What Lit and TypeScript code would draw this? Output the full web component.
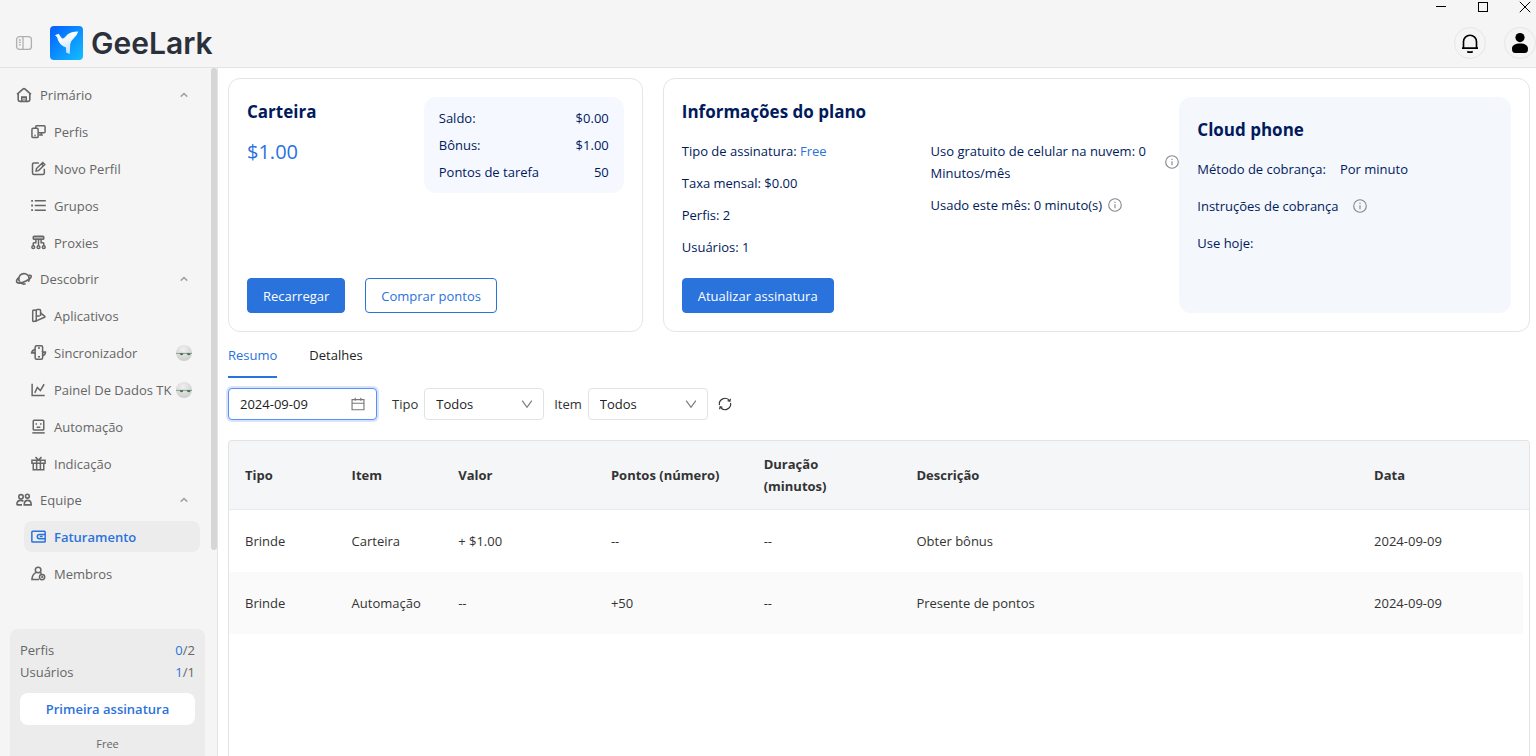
import { LitElement, html, svg, css, nothing } from "lit";
import { customElement, property, state } from "lit/decorators.js";
import { classMap } from "lit/directives/class-map.js";

/** Line icons, all drawn on a 16 x 16 grid. */
const icons: Record<string, unknown> = {
  home: svg`<path d="M1 7.400 6.900 2.100q1.100-1 2.200 0L15 7.400M2.200 6.600v6.200q0 1.600 1.600 1.600h8.400q1.600 0 1.600-1.600V6.600"/><path d="M5.800 14.200v-4.100h4.400v4.100M8 11.400v1.400"/>`,
  profiles: svg`<rect x="1" y="4.600" width="6.600" height="9.800" rx="1.200"/><path d="M5 4.400V2.800q0-1 1-1h8q1 0 1 1v5.400q0 1-1 1H7.800M11 9.400v2.200M8.600 11.800h4M3.600 12.200h1.400"/>`,
  edit: svg`<path d="M8.400 2H3.200Q1.600 2 1.600 3.600v9.200q0 1.600 1.600 1.600h9.400q1.600 0 1.600-1.600V8.200"/><path d="m5.400 10.800.5-2.800 6.600-6.400 2.200 2.200-6.600 6.500zM11 3l2.200 2.200"/>`,
  list: svg`<path d="M4 3h11.800M4 8h11.800M4 13h11.800"/><path d="M.2 3h1.900M.2 8h1.900M.2 13h1.900" stroke-width="1.900"/>`,
  proxies: svg`<rect x="2.400" y="1.200" width="11.200" height="3.400" rx="1" fill="currentColor" fill-opacity=".45"/><path d="M8 4.800v6.400M2.400 11.400V8.200M13.600 8.200v3.200M2.400 8.200h2.800V5M13.600 8.200h-2.800V5"/><circle cx="2.400" cy="13" r="1.500"/><circle cx="8" cy="13" r="1.500"/><circle cx="13.600" cy="13" r="1.500"/>`,
  planet: svg`<circle cx="8" cy="7.800" r="5.200" stroke-dasharray="21.500 3.500 6.500 1.200" transform="rotate(150 8 7.800)"/><path d="M3 6.400C.8 8.200 0 10.200.8 11.100c1.300 1.500 5.100 1 9.200-1.100 4-2 6-4 5.200-5.200-.3-.5-1.200-.7-2.600-.5"/>`,
  apps: svg`<path d="M5.600 2.600 3 2.200q-1.200 0-1.200 1.200v9.800q0 1.200 1.200 1.200l2.600-.6V2.600q0-1 1-1h2.600q1 0 1 1v5.800"/><path d="M4.400 14.300 14.400 9.900q.9-.6 0-1.300L10.200 5.200M5.800 8.400h3.600"/>`,
  sync: svg`<rect x="4.400" y=".8" width="8" height="14.400" rx="1.600"/><path d="M7.400 3.200h2.200M4.200 4.800C1.800 5.400.8 6.800.6 8.600h3.200L2.600 7.200M12.800 11.200c1.800-.6 2.600-2 2.600-3.800h-2.600l1.200 1.200M7.400 12.600h2.200"/>`,
  chart: svg`<path d="M1.200 1.800v12.600h13.400M4 11.600l2.800-5.800 3.200 3.400 4-6.800"/>`,
  robot: svg`<rect x="2.400" y="1.200" width="11.200" height="10.600" rx="1"/><path d="M1.400 14.800h13.200"/><path d="M5.600 4.400v1.800M10.400 4.400v1.800M6 8.800h4"/>`,
  gift: svg`<path d="M1 4.600h14v3.200H1zM2.400 7.800v6.800h11.200V7.800M6 4.800v9.600M10 4.800v9.600M4.800 1.200 8 4.400l3.200-3.200"/>`,
  team: svg`<circle cx="5" cy="4.800" r="2.200"/><circle cx="11.400" cy="4.200" r="1.900"/><path d="M.8 12.800c0-2.800 1.600-4.400 4-4.400 1 0 1.900.3 2.600.9M.8 12.900H6M8.200 12.900h7c0-2.800-1.200-4.500-3.500-4.500s-3.500 1.700-3.500 4.500z"/>`,
  wallet: svg`<rect x=".9" y="2.400" width="14.200" height="11.400" rx=".8"/><path d="M15 5.800H9a2.300 2.300 0 0 0 0 4.600h6M9.400 8.100h3"/>`,
  member: svg`<circle cx="7.600" cy="4.200" r="3"/><path d="M5.600 6.800C2.800 8 1.200 10.400 1 14.400h7.600M9.600 6.800l1.800 1.400"/><circle cx="11.800" cy="11.800" r="2.800"/><path d="M11.800 10.400v1.600h1.200"/>`,
  toggle: svg`<rect x=".6" y="1.600" width="14.800" height="12.800" rx="3"/><path d="M7 1.800v12.400M2.800 5h2M2.800 7.400h2M2.800 9.800h2"/>`,
  bell: svg`<path d="M2.800 12V7a5.200 5.200 0 0 1 10.400 0v5M1.600 12.100h12.800M5.800 14.900q2.200.9 4.400 0"/>`,
  info: svg`<circle cx="8" cy="8" r="7.200"/><path d="M8 7v4.600M8 4.200v1.400"/>`,
  up: svg`<path d="m1.400 11.200 6.600-6 6.600 6" stroke-width="3"/>`,
  down: svg`<path d="m1.600 3.400 6.400 9 6.400-9"/>`,
  calendar: svg`<path d="M1.200 3h13.600v11.600H1.200zM1.200 7.200h13.600M4.800.8v3.600M11.200.8v3.600"/>`,
  refresh: svg`<path d="M1.600 9.200A6.500 6.500 0 0 1 13.200 4.200M14.400 6.800A6.500 6.500 0 0 1 2.800 11.800"/><path d="m14.200 2-.6 2.800-2.600-.6M1.800 14l.6-2.800 2.600.6"/>`,
};

@customElement("gl-icon")
class GlIcon extends LitElement {
  @property() name = "";
  static styles = css`
    :host { display: inline-flex; flex: none; width: 16px; height: 16px; }
    svg { width: 100%; height: 100%; fill: none; stroke: currentColor; stroke-width: var(--icon-stroke, 1.3); overflow: visible; }
  `;
  render() {
    return html`<svg viewBox="0 0 16 16" aria-hidden="true">${icons[this.name]}</svg>`;
  }
}

interface NavItem { icon: string; label: string; badge?: boolean; active?: boolean }
interface NavGroup { icon: string; label: string; items: NavItem[] }

const groups: NavGroup[] = [
  {
    icon: "home", label: "Primário", items: [
      { icon: "profiles", label: "Perfis" },
      { icon: "edit", label: "Novo Perfil" },
      { icon: "list", label: "Grupos" },
      { icon: "proxies", label: "Proxies" },
    ],
  },
  {
    icon: "planet", label: "Descobrir", items: [
      { icon: "apps", label: "Aplicativos" },
      { icon: "sync", label: "Sincronizador", badge: true },
      { icon: "chart", label: "Painel De Dados TK", badge: true },
      { icon: "robot", label: "Automação" },
      { icon: "gift", label: "Indicação" },
    ],
  },
  {
    icon: "team", label: "Equipe", items: [
      { icon: "wallet", label: "Faturamento", active: true },
      { icon: "member", label: "Membros" },
    ],
  },
];

@customElement("gl-sidebar")
class GlSidebar extends LitElement {
  static styles = css`
    :host {
      position: relative; display: flex; flex-direction: column; width: 217px; min-height: 0;
      background: #f5f5f5; border-right: 1px solid #e3e3e3; color: #666; font-size: 13px; line-height: 22px;
      --icon-stroke: 1.6;
    }
    nav { flex: 1; min-height: 0; overflow: hidden; display: flex; flex-direction: column; gap: 6px; padding: 12px 17px 0 16px; }
    ul { list-style: none; margin: 0; padding: 0 0 0 8px; display: flex; flex-direction: column; gap: 6px; }
    .group { display: flex; align-items: center; gap: 8px; height: 30px; padding: 0 12px 0 0; border: 0; background: none; font: inherit; color: inherit; text-align: left; }
    .group .label { flex: 1; }
    .chevron { width: 8px; height: 8px; color: #a3a3a3; }
    a { display: flex; align-items: center; gap: 8px; height: 31px; padding: 0 8px 0 7px; border-radius: 8px; color: inherit; text-decoration: none; white-space: nowrap; }
    a gl-icon { width: 15px; height: 15px; }
    a .label { flex: 1; min-width: 0; }
    a.badged { gap: 0; }
    a.badged gl-icon { margin-right: 8px; }
    a.active { background: #ececec; color: #2a72dc; font-weight: 600; }
    .badge { width: 16px; height: 16px; flex: none; }
    .thumb { position: absolute; top: 0; right: 0; width: 6px; height: 70%; border-radius: 3px; background: #d6d6d6; }
    .quota { margin: 0 12px 0 10px; padding: 10px 10px 1px; border-radius: 8px 8px 0 0; background: #ececec; }
    .row { display: flex; justify-content: space-between; }
    .row b { font-weight: 400; color: #2a72dc; }
    .subscribe { width: 100%; height: 32px; margin: 10px 0 8px; border: 0; border-radius: 8px; background: #fff; color: #2a72dc; font: inherit; font-weight: 600; }
    .plan { text-align: center; font-size: 11px; }
  `;
  render() {
    return html`
      <nav aria-label="Menu">
        ${groups.map((g) => html`
          <button class="group" type="button"><gl-icon name=${g.icon}></gl-icon><span class="label">${g.label}</span><gl-icon class="chevron" name="up"></gl-icon></button>
          <ul>${g.items.map((i) => html`<li>
            <a href="#" class=${classMap({ active: !!i.active, badged: !!i.badge })}>
              <gl-icon name=${i.icon}></gl-icon><span class="label">${i.label}</span>
              ${i.badge ? this.badge() : nothing}
            </a></li>`)}</ul>`)}
      </nav>
      <div class="thumb"></div>
      <section class="quota">
        <div class="row"><span>Perfis</span><span><b>0</b>/2</span></div>
        <div class="row"><span>Usuários</span><span><b>1</b>/1</span></div>
        <button class="subscribe" type="button">Primeira assinatura</button>
        <div class="plan">Free</div>
      </section>`;
  }
  badge() {
    return html`<svg class="badge" viewBox="0 0 16 16" aria-hidden="true">
      <defs><radialGradient id="ball" cx=".45" cy=".3" r=".7"><stop offset="0" stop-color="#f0f0f0"/><stop offset="1" stop-color="#cdcdcd"/></radialGradient></defs>
      <circle cx="8" cy="8" r="8" fill="url(#ball)"/>
      <path d="M0 8.400h16" stroke="#8a8a8a" stroke-width=".8"/>
      <path d="M3.600 8.200h3.800q-.2 2-1.800 2t-2-2zM10.600 8.200h4q-.2 2-1.800 2t-2.200-2z" fill="#2f7a48"/>
    </svg>`;
  }
}

@customElement("gl-header")
class GlHeader extends LitElement {
  static styles = css`
    :host { display: flex; flex-direction: column; background: #f5f5f5; border-bottom: 1px solid #e3e3e3; }
    button { padding: 0; border: 0; background: none; color: #000; display: grid; place-items: center; }
    .window { display: flex; justify-content: flex-end; gap: 30px; height: 14px; padding-right: 5px; }
    .window button { width: 12px; height: 14px; }
    .window svg { width: 12px; height: 12px; fill: none; stroke: #000; }
    .bar { display: flex; align-items: center; height: 48px; padding: 5px 0 0 16px; }
    .toggle { color: #b0b0b0; }
    .logo { display: flex; align-items: center; gap: 8px; flex: 1; margin-left: 18px; color: #2c303a; font: 600 30px/36px Inter, "Open Sans", sans-serif; text-decoration: none; }
    .logo svg { width: 33px; height: 34px; }
    .actions { display: flex; gap: 18px; }
    .round { width: 32px; height: 32px; border: 1px solid #e6e6e6; border-radius: 50%; }
    .round gl-icon { width: 20px; height: 20px; }
    .round svg { width: 18px; height: 22px; }
  `;
  render() {
    return html`
      <div class="window">
        <button type="button" aria-label="Minimizar"><svg viewBox="0 0 12 12"><path d="M1 5.500h10"/></svg></button>
        <button type="button" aria-label="Maximizar"><svg viewBox="0 0 12 12"><rect x="1.500" y="1.500" width="9" height="9"/></svg></button>
        <button type="button" aria-label="Fechar"><svg viewBox="0 0 12 12"><path d="m.8.800 10.400 10.400M11.200.800.800 11.200"/></svg></button>
      </div>
      <div class="bar">
        <button class="toggle" type="button" aria-label="Recolher menu"><gl-icon name="toggle"></gl-icon></button>
        <a class="logo" href="#">
          <svg viewBox="0 0 33 34" aria-hidden="true">
            <defs>
              <linearGradient id="sky" x1="0" y1="0" x2="1" y2="1"><stop offset=".1" stop-color="#0568ff"/><stop offset="1" stop-color="#12bfff"/></linearGradient>
              <linearGradient id="wing" x1="0" y1="0" x2=".4" y2="1"><stop offset=".3" stop-color="#fff"/><stop offset="1" stop-color="#c3e2ff"/></linearGradient>
            </defs>
            <rect width="33" height="34" rx="4" fill="url(#sky)"/>
            <path d="M5 9.200 8.600 7.800l3.200 4.400q1.200 1 2.600-.4l3.400-3.600Q20.600 5.600 28.200 5.400q-1 4.200-4.800 7.400-3 2.400-3.200 5.400l-.4 9.800-3.600-1.400-.2-5Q8.800 19 7 11z" fill="url(#wing)"/>
          </svg>
          <span>GeeLark</span>
        </a>
        <div class="actions">
          <button class="round" type="button" aria-label="Notificações"><gl-icon name="bell"></gl-icon></button>
          <button class="round" type="button" aria-label="Conta"><svg viewBox="0 0 18 22"><circle cx="9" cy="5.600" r="4.600"/><path d="M1 16.400C1 13 4.400 11.400 9 11.400s8 1.600 8 5q0 4.600-3.200 4.600H4.200Q1 21 1 16.400z"/></svg></button>
        </div>
      </div>`;
  }
}

const sharedControls = css`
  .btn { height: 35px; padding: 0 15px; border: 1px solid #2a72dc; border-radius: 4px; background: #fff; color: #2a72dc; font: inherit; }
  .btn.primary { background: #2a72dc; color: #fff; }
`;

@customElement("gl-summary")
class GlSummary extends LitElement {
  static styles = [sharedControls, css`
    :host { display: grid; grid-template-columns: 11fr 23fr; gap: 20px; color: #001a5c; }
    .card { border: 1px solid #e5e5e5; border-radius: 12px; padding: 18px; }
    h2 { margin: 0; font-size: 17px; line-height: 30px; font-weight: 700; }
    .wallet { display: flex; flex-direction: column; justify-content: space-between; }
    .top { display: flex; justify-content: space-between; align-items: flex-start; }
    .total { margin-top: 14px; font-size: 20px; line-height: 22px; font-weight: 500; color: #2a72dc; }
    dl { width: 170px; margin: 0; padding: 8px 15px 7px; border-radius: 12px; background: #f5f8ff; }
    dl div { display: flex; justify-content: space-between; line-height: 27px; }
    dd { margin: 0; }
    .buttons { display: flex; gap: 20px; }
    .plan { display: grid; grid-template-columns: 3fr 3fr 4fr; grid-template-rows: auto 1fr auto; }
    .plan h2 { grid-column: 1 / 3; }
    .col { display: flex; flex-direction: column; gap: 10px; margin-top: 13px; }
    .col p, .phone p { margin: 0; }
    .line { display: flex; align-items: center; gap: 6px; }
    .plan > .btn { grid-row: 3; grid-column: 1; justify-self: start; margin-top: 20px; }
    gl-icon { width: 14px; height: 14px; color: #85888f; }
    .link { color: #2a72dc; text-decoration: none; }
    .phone { grid-column: 3; grid-row: 1 / 4; padding: 18px; border-radius: 12px; background: #f4f7fc; display: flex; flex-direction: column; gap: 15px; }
    .phone h2 { margin-bottom: -2px; }
    .pair { display: flex; align-items: center; gap: 14px; }
  `];
  render() {
    return html`
      <section class="card wallet">
        <div class="top">
          <div><h2>Carteira</h2><div class="total">$1.00</div></div>
          <dl>
            <div><dt>Saldo:</dt><dd>$0.00</dd></div>
            <div><dt>Bônus:</dt><dd>$1.00</dd></div>
            <div><dt>Pontos de tarefa</dt><dd>50</dd></div>
          </dl>
        </div>
        <div class="buttons">
          <button class="btn primary" type="button">Recarregar</button>
          <button class="btn" type="button">Comprar pontos</button>
        </div>
      </section>
      <section class="card plan">
        <h2>Informações do plano</h2>
        <div class="col">
          <p>Tipo de assinatura: <a class="link" href="#">Free</a></p>
          <p>Taxa mensal: $0.00</p>
          <p>Perfis: 2</p>
          <p>Usuários: 1</p>
        </div>
        <div class="col">
          <p class="line"><span>Uso gratuito de celular na nuvem: 0 Minutos/mês</span><gl-icon name="info"></gl-icon></p>
          <p class="line"><span>Usado este mês: 0 minuto(s)</span><gl-icon name="info"></gl-icon></p>
        </div>
        <button class="btn primary" type="button">Atualizar assinatura</button>
        <section class="phone">
          <h2>Cloud phone</h2>
          <p class="pair"><span>Método de cobrança:</span><span>Por minuto</span></p>
          <p class="pair"><span>Instruções de cobrança</span><gl-icon name="info"></gl-icon></p>
          <p>Use hoje:</p>
        </section>
      </section>`;
  }
}

const records = [
  ["Brinde", "Carteira", "+ $1.00", "--", "--", "Obter bônus", "2024-09-09"],
  ["Brinde", "Automação", "--", "+50", "--", "Presente de pontos", "2024-09-09"],
];

@customElement("gl-history")
class GlHistory extends LitElement {
  @state() tab = "Resumo";
  static styles = css`
    :host { display: flex; flex-direction: column; flex: 1; min-height: 0; color: #333; }
    .tabs { display: flex; gap: 32px; }
    .tab { padding: 12px 0 10px; border: 0; border-bottom: 2px solid transparent; background: none; font: inherit; color: #222; }
    .tab.on { color: #2a72dc; border-color: #2a72dc; }
    .filters { display: flex; align-items: center; gap: 10px; margin: 10px 0 20px; }
    .field { display: flex; align-items: center; gap: 6px; }
    .box { box-sizing: border-box; display: grid; grid-template-columns: 1fr 14px; align-items: center; width: 120px; height: 32px; padding: 0 9px 0 0; border: 1px solid #e3e3e3; border-radius: 4px; background: #fff; }
    .box.date { width: 149px; margin-right: 5px; padding-right: 11px; border-color: #5b8ff5; box-shadow: 0 0 0 2px #d7e4fb; }
    .box input, .box select { grid-area: 1 / 1 / 2 / 3; box-sizing: border-box; width: 100%; height: 30px; padding: 0 0 0 11px; border: 0; outline: 0; background: none; appearance: none; font: inherit; color: #222; }
    .box gl-icon { grid-area: 1 / 2; pointer-events: none; color: #777; }
    .box gl-icon.small { width: 12px; height: 12px; justify-self: center; --icon-stroke: 1.5; }
    gl-icon { width: 14px; height: 14px; }
    .refresh { padding: 0; border: 0; background: none; display: grid; color: #333; }
    .frame { flex: 1; min-height: 0; overflow: hidden; border: 1px solid #e3e3e3; border-bottom: 0; border-radius: 4px 4px 0 0; }
    table { width: 100%; border-collapse: separate; border-spacing: 0; table-layout: fixed; }
    th, td { box-sizing: border-box; padding: 0 16px; text-align: left; }
    th { height: 69px; background: #f4f6f8; border-bottom: 1px solid #e9ebee; font-weight: 700; }
    .narrow { width: 8.2%; }
    .medium { width: 11.75%; }
    .wide { width: 35.2%; }
    .gutter { width: 6px; padding: 0; }
    td { height: 62px; }
    tbody tr:nth-child(even) td { background: #fafafa; }
  `;
  render() {
    return html`
      <div class="tabs" role="tablist">
        ${["Resumo", "Detalhes"].map((t) => html`<button type="button" role="tab" class=${classMap({ tab: true, on: this.tab === t })} @click=${() => (this.tab = t)}>${t}</button>`)}
      </div>
      <div class="filters">
        <div class="box date"><input type="text" aria-label="Data" value="2024-09-09"><gl-icon name="calendar"></gl-icon></div>
        ${["Tipo", "Item"].map((f) => html`
          <div class="field"><label for=${f}>${f}</label>
            <div class="box"><select id=${f}><option>Todos</option></select><gl-icon class="small" name="down"></gl-icon></div>
          </div>`)}
        <button class="refresh" type="button" aria-label="Atualizar"><gl-icon name="refresh"></gl-icon></button>
      </div>
      <div class="frame">
        <table>
          <thead><tr>
            <th class="narrow">Tipo</th><th class="narrow">Item</th><th class="medium">Valor</th>
            <th class="medium">Pontos (número)</th><th class="medium">Duração<br>(minutos)</th>
            <th class="wide">Descrição</th><th>Data</th><th class="gutter" aria-hidden="true"></th>
          </tr></thead>
          <tbody>${records.map((r) => html`<tr>${r.map((c) => html`<td>${c}</td>`)}</tr>`)}</tbody>
        </table>
      </div>`;
  }
}

@customElement("app-root")
class AppRoot extends LitElement {
  static styles = css`
    :host { display: grid; grid-template-rows: auto minmax(0, 1fr); height: 100vh; overflow: hidden; background: #fff; font: 13px/22px "Open Sans", "Noto Sans", sans-serif; }
    .body { display: grid; grid-template-columns: auto minmax(0, 1fr); min-height: 0; }
    main { display: flex; flex-direction: column; min-height: 0; padding: 10px 6px 0 10px; }
  `;
  render() {
    return html`
      <gl-header></gl-header>
      <div class="body">
        <gl-sidebar></gl-sidebar>
        <main><gl-summary></gl-summary><gl-history></gl-history></main>
      </div>`;
  }
}
